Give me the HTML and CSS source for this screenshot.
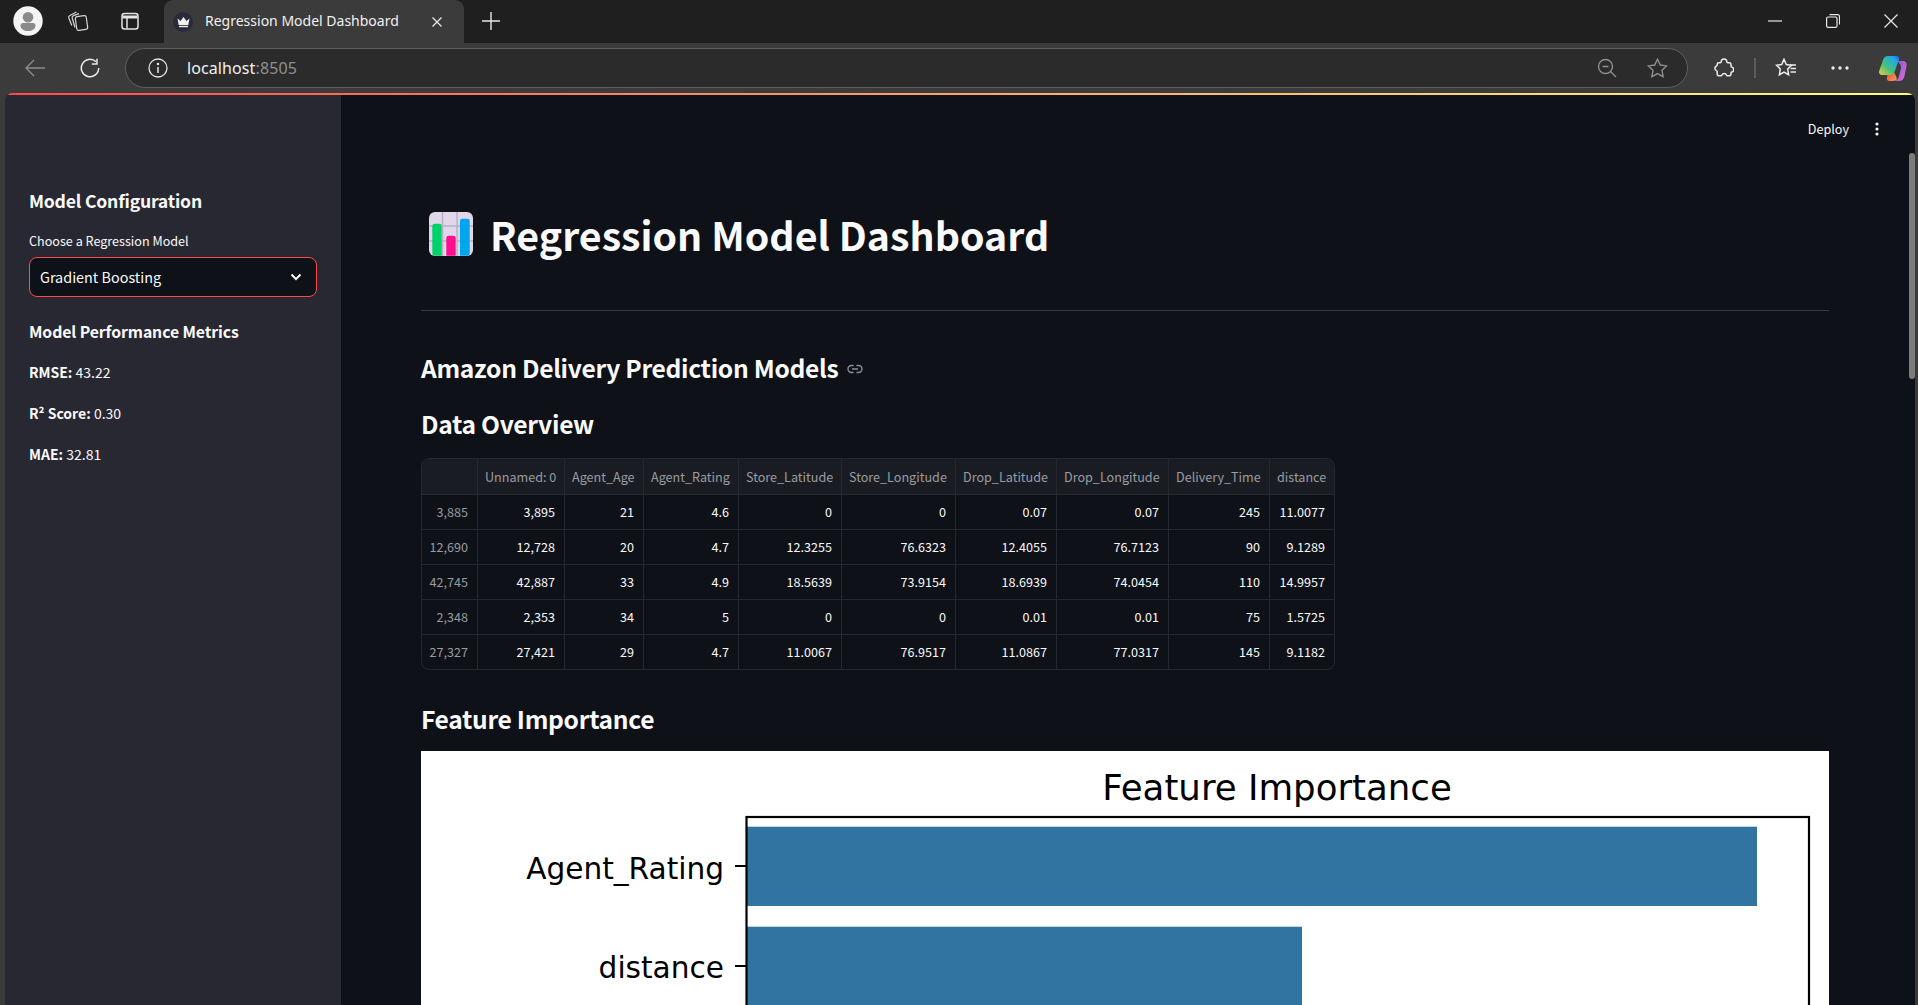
FILE: index.html
```html
<!DOCTYPE html>
<html lang="en">
<head>
<meta charset="utf-8">
<title>Regression Model Dashboard</title>
<link rel="stylesheet" href="styles.css">
</head>
<body>
<div class="browser">
  <header class="tabstrip">
    <div class="avatar">
      <svg width="30" height="30" viewBox="0 0 30 30"><circle cx="15" cy="15" r="14.700" fill="#f4f4f4"/><circle cx="15" cy="11.300" r="5.300" fill="#8a8a8a"/><path d="M7.500 19.500a2.500 2.500 0 0 1 2.500-2.500h10a2.500 2.500 0 0 1 2.500 2.500c0 3.500-3.300 5.500-7.500 5.500s-7.500-2-7.500-5.500z" fill="#8a8a8a"/></svg>
    </div>
    <button class="strip-btn workspaces">
      <svg width="22" height="22" viewBox="0 0 22 22" fill="none" stroke="#d6d6d6" stroke-width="1.200"><rect x="9" y="6" width="11" height="14" rx="2" transform="rotate(-8 14.500 13)"/><path d="M8 17.500 5.200 8a2 2 0 0 1 1.300-2.400L12 3.600"/><path d="M4.800 15.500 1.800 8a2 2 0 0 1 1.100-2.500L9.500 2"/></svg>
    </button>
    <button class="strip-btn verticaltabs">
      <svg width="20" height="20" viewBox="0 0 20 20" fill="none" stroke="#e4e4e4" stroke-width="1.500"><rect x="2" y="2.500" width="16" height="15.500" rx="2.500"/><path d="M2.500 6h15" stroke-width="3"/><path d="M7 7v10.500"/></svg>
    </button>
    <div class="tab">
      <span class="favicon">
        <svg width="15" height="12" viewBox="0 0 14 12"><path d="M1 2.500 4 5l3-4 3 4 3-2.500-1.200 6.500H2.200z" fill="#f0f0f0"/><rect x="2.500" y="9.800" width="9" height="1.400" fill="#f0f0f0"/></svg>
      </span>
      <span class="tab-title">Regression Model Dashboard</span>
      <svg class="tab-close" width="12" height="12" viewBox="0 0 12 12" stroke="#e8e8e8" stroke-width="1.300"><path d="M1.500 1.500l9 9M10.500 1.500l-9 9"/></svg>
    </div>
    <svg class="new-tab" width="18" height="18" viewBox="0 0 18 18" stroke="#e8e8e8" stroke-width="1.400"><path d="M9 0v18M0 9h18"/></svg>
    <div class="window-controls">
      <svg width="14" height="14" viewBox="0 0 14 14" stroke="#e8e8e8" stroke-width="1.200"><path d="M0 7h14"/></svg>
      <svg width="14" height="14" viewBox="0 0 14 14" fill="none" stroke="#e8e8e8" stroke-width="1.200"><rect x=".6" y="3" width="10.400" height="10.400" rx="1.500"/><path d="M3.500.6h8a2 2 0 0 1 2 2v8"/></svg>
      <svg width="14" height="14" viewBox="0 0 14 14" stroke="#e8e8e8" stroke-width="1.200"><path d="M.5.500l13 13M13.500.500l-13 13"/></svg>
    </div>
  </header>

  <nav class="toolbar">
    <svg class="tool-back" width="20" height="18" viewBox="0 0 20 18" fill="none" stroke="#8b8b8b" stroke-width="1.400"><path d="M20 9H1M9 1 1 9l8 8"/></svg>
    <svg class="tool-reload" width="20" height="20" viewBox="0 0 20 20" fill="none" stroke="#ececec" stroke-width="1.500"><path d="M18.700 10A8.700 8.700 0 1 1 16 3.700"/><path d="M17 .8v5.200h-5.200"/></svg>
    <div class="omnibox">
      <svg class="info" width="20" height="20" viewBox="0 0 20 20" fill="none" stroke="#e6e6e6" stroke-width="1.300"><circle cx="10" cy="10" r="9"/><path d="M10 9v6" stroke-width="1.500"/><circle cx="10" cy="6" r=".6" fill="#e6e6e6"/></svg>
      <span class="url">localhost<span class="port">:8505</span></span>
      <svg class="zoom-out" width="20" height="20" viewBox="0 0 20 20" fill="none" stroke="#8f8f8f" stroke-width="1.400"><circle cx="8.500" cy="8.500" r="7"/><path d="M13.500 13.500 19 19M5.500 8.500h6"/></svg>
      <svg class="star" width="21" height="20" viewBox="0 0 21 20" fill="none" stroke="#8f8f8f" stroke-width="1.400"><path d="m10.500 1.200 2.800 5.800 6.300.9-4.600 4.400 1.100 6.300-5.600-3-5.600 3 1.100-6.300L1.400 7.900l6.300-.9z"/></svg>
    </div>
    <svg class="tool-puzzle" width="20" height="20" viewBox="0 0 20 20" fill="none" stroke="#ececec" stroke-width="1.500"><path d="M7.200 3.800a2.800 2.800 0 0 1 5.600 0c0 .6.400 1 1 1h1.700a1.500 1.500 0 0 1 1.500 1.500v1.900c0 .5.300.8.800.9a2.600 2.600 0 0 1 0 5c-.5.100-.8.400-.8.900v1.300a1.500 1.500 0 0 1-1.500 1.500h-2.100c-.5 0-.8-.3-1-.8a2.400 2.400 0 0 0-4.400 0c-.2.500-.5.800-1 .8H4.700a1.500 1.500 0 0 1-1.500-1.500v-2.700c0-.5-.3-.8-.8-1a2.500 2.500 0 0 1 0-4.600c.5-.2.800-.5.800-1V6.300a1.500 1.500 0 0 1 1.500-1.500h1.500c.6 0 1-.4 1-1z"/></svg>
    <span class="tool-divider"></span>
    <svg class="tool-favs" width="22" height="20" viewBox="0 0 22 20" fill="none" stroke="#ececec" stroke-width="1.500"><path d="M9 1.200 11.300 6.500l5.200.7-3.800 3.700.9 5.800L9 14l-4.600 2.700.9-5.800L1.500 7.200l5.200-.7z"/><path d="M15 7h6M15.500 10.500H21M15.500 14H21"/></svg>
    <svg class="tool-more" width="18" height="4" viewBox="0 0 18 4" fill="#ececec"><circle cx="2" cy="2" r="1.700"/><circle cx="9" cy="2" r="1.700"/><circle cx="16" cy="2" r="1.700"/></svg>
    <svg class="tool-copilot" width="28" height="26" viewBox="0 0 28 26">
      <defs>
        <linearGradient id="cpa" x1="0" y1="1" x2="1" y2="0"><stop offset="0" stop-color="#f6c83c"/><stop offset=".4" stop-color="#46c27a"/><stop offset=".8" stop-color="#22a6e8"/><stop offset="1" stop-color="#1a5fd8"/></linearGradient>
        <linearGradient id="cpb" x1="0" y1="0" x2="1" y2="1"><stop offset="0" stop-color="#7a5ae8"/><stop offset="1" stop-color="#e86ac8"/></linearGradient>
        <linearGradient id="cpc" x1="0" y1="0" x2="1" y2="1"><stop offset="0" stop-color="#e8402c"/><stop offset="1" stop-color="#f6a05a"/></linearGradient>
      </defs>
      <path d="M14 15 17 21c.8 2 2 5-3 5H11c-3 0-3.500-2-3-4l2-7z" fill="url(#cpc)"/>
      <path d="M18 6h6c3 0 4 2.500 3.500 5l-2 10c-.6 3-2.500 5-5.500 5h-4c2.500-1 3.500-3 4-5l2-8c.3-2-.5-4-4-7z" fill="url(#cpb)"/>
      <path d="M9 1h9c2 0 2.500 2 1.800 4l-4.300 12c-.8 2-2 3-4 3H3C.5 20-.5 18 .3 15.500L4 5c.8-2.500 2.500-4 5-4z" fill="url(#cpa)"/>
    </svg>
  </nav>

  <div class="viewport">
    <div class="decoration"></div>
    <div class="app">
      <aside class="sidebar">
        <h3 class="side-title">Model Configuration</h3>
        <label class="side-label">Choose a Regression Model</label>
        <div class="select">
          <span>Gradient Boosting</span>
          <svg width="12" height="8" viewBox="0 0 12 8" fill="none" stroke="#fafafa" stroke-width="2"><path d="m1.500 1.500 4.500 4.500 4.500-4.500"/></svg>
        </div>
        <h4 class="side-sub">Model Performance Metrics</h4>
        <p class="metric"><strong>RMSE:</strong> 43.22</p>
        <p class="metric"><strong>R² Score:</strong> 0.30</p>
        <p class="metric"><strong>MAE:</strong> 32.81</p>
      </aside>

      <main class="main">
        <div class="topbar">
          <span class="deploy">Deploy</span>
          <svg class="kebab" width="4" height="14" viewBox="0 0 4 14" fill="#fafafa"><circle cx="2" cy="2" r="1.600"/><circle cx="2" cy="7" r="1.600"/><circle cx="2" cy="12" r="1.600"/></svg>
        </div>
        <div class="content">
          <h1 class="title">
            <svg class="emoji" width="44" height="44" viewBox="0 0 44 44">
              <rect width="44" height="44" rx="6" fill="#e0d8ea"/>
              <path d="M0 14h44M0 29h44M13.500 0v44M28 0v44" stroke="#b9b0c4" stroke-width="1.500"/>
              <path d="M3.300 14a2.300 2.300 0 0 1 2.300-2.300h4.800a2.300 2.300 0 0 1 2.300 2.300v29.700H5.600a2.300 2.300 0 0 1-2.300-2.300z" fill="#00d26a"/>
              <path d="M17.300 26a2.300 2.300 0 0 1 2.300-2.300h4.800a2.300 2.300 0 0 1 2.300 2.300v17.700h-9.400z" fill="#ff0e8e"/>
              <path d="M31 9a2.300 2.300 0 0 1 2.300-2.300h5.100a2.300 2.300 0 0 1 2.300 2.300v32.400a2.300 2.300 0 0 1-2.300 2.300H31z" fill="#00a6ed"/>
            </svg>
            Regression Model Dashboard
          </h1>
          <hr class="rule">
          <h2 class="heading amazon">Amazon Delivery Prediction Models
            <svg class="link" width="16" height="10" viewBox="0 0 16 10" fill="none" stroke="#8d8f94" stroke-width="1.400"><path d="M6.500 1.500H4.500a3.500 3.500 0 0 0 0 7h2M9.500 1.500h2a3.500 3.500 0 0 1 0 7h-2M5 5h6"/></svg>
          </h2>
          <h3 class="heading overview">Data Overview</h3>
          <div class="frame">
            <table class="data">
              <colgroup>
                <col class="c0"><col class="c1"><col class="c2"><col class="c3"><col class="c4"><col class="c5"><col class="c6"><col class="c7"><col class="c8"><col class="c9">
              </colgroup>
              <thead>
                <tr><th></th><th>Unnamed: 0</th><th>Agent_Age</th><th>Agent_Rating</th><th>Store_Latitude</th><th>Store_Longitude</th><th>Drop_Latitude</th><th>Drop_Longitude</th><th>Delivery_Time</th><th>distance</th></tr>
              </thead>
              <tbody>
                <tr><th>3,885</th><td>3,895</td><td>21</td><td>4.6</td><td>0</td><td>0</td><td>0.07</td><td>0.07</td><td>245</td><td>11.0077</td></tr>
                <tr><th>12,690</th><td>12,728</td><td>20</td><td>4.7</td><td>12.3255</td><td>76.6323</td><td>12.4055</td><td>76.7123</td><td>90</td><td>9.1289</td></tr>
                <tr><th>42,745</th><td>42,887</td><td>33</td><td>4.9</td><td>18.5639</td><td>73.9154</td><td>18.6939</td><td>74.0454</td><td>110</td><td>14.9957</td></tr>
                <tr><th>2,348</th><td>2,353</td><td>34</td><td>5</td><td>0</td><td>0</td><td>0.01</td><td>0.01</td><td>75</td><td>1.5725</td></tr>
                <tr><th>27,327</th><td>27,421</td><td>29</td><td>4.7</td><td>11.0067</td><td>76.9517</td><td>11.0867</td><td>77.0317</td><td>145</td><td>9.1182</td></tr>
              </tbody>
            </table>
          </div>
          <h3 class="heading feature">Feature Importance</h3>
          <svg class="chart" width="1408" height="254" viewBox="0 0 1408 254">
            <rect width="1408" height="254" fill="#fff"/>
            <text class="chart-title" x="856" y="49" text-anchor="middle">Feature Importance</text>
            <rect x="326" y="75.700" width="1010" height="79.300" fill="#3274a1"/>
            <rect x="326" y="175.700" width="555" height="79.300" fill="#3274a1"/>
            <rect x="325.500" y="66" width="1062.500" height="200" fill="none" stroke="#000" stroke-width="2.200"/>
            <path d="M314 115h11M314 215h11" stroke="#000" stroke-width="2"/>
            <text class="chart-label" x="303" y="127.500" text-anchor="end">Agent_Rating</text>
            <text class="chart-label" x="303" y="227" text-anchor="end">distance</text>
          </svg>
        </div>
        <div class="scrollthumb"></div>
      </main>
    </div>
  </div>
</div>
</body>
</html>
```
FILE: styles.css
```css
* { box-sizing: border-box; }
html, body { margin: 0; height: 100%; overflow: hidden; background: #3b3b3b; }
body { font-family: "Noto Sans CJK SC", "Noto Sans", sans-serif; color: #fafafa; }
h1, h2, h3, h4, p { margin: 0; }
button { background: none; border: 0; padding: 0; }
svg { display: block; flex: none; }

.browser { display: flex; flex-direction: column; height: 1005px; }

.tabstrip { display: flex; align-items: center; height: 43px; padding-bottom: 2px; background: #1f1f1f; flex: none; }
.avatar { margin-left: 13px; width: 30px; }
.strip-btn { display: flex; }
.workspaces { margin-left: 24px; }
.verticaltabs { margin-left: 31px; }
.tab { display: flex; align-items: center; align-self: flex-end; width: 300px; height: 43px; margin: 0 0 -2px 24px; background: #3b3b3b; border-radius: 9px 9px 0 0; }
.favicon { display: flex; align-items: center; justify-content: center; width: 20px; height: 20px; margin-left: 9px; border-radius: 50%; background: #2a2a3a; }
.tab-title { margin-left: 12px; padding-bottom: 2px; font: 14px/20px "Noto Sans", sans-serif; color: #f0f0f0; width: 226px; white-space: nowrap; }
.new-tab { margin-left: 18px; }
.window-controls { display: flex; align-items: center; gap: 44px; margin-left: auto; margin-right: 20px; }

.toolbar { display: flex; align-items: center; height: 50px; background: #3b3b3b; flex: none; }
.tool-back { margin-left: 25px; }
.tool-reload { margin-left: 35px; }
.omnibox { display: flex; align-items: center; width: 1563px; height: 40px; margin-left: 25px; background: #2b2b2b; border: 1.500px solid #5f5f5f; border-radius: 20px; }
.info { margin-left: 22px; }
.url { margin-left: 19px; font: 16px/20px "Noto Sans", sans-serif; color: #f2f2f2; letter-spacing: .1px; }
.port { color: #8f8f8f; }
.zoom-out { margin-left: auto; }
.star { margin-left: 30px; margin-right: 19px; }
.tool-puzzle { margin-left: 26px; }
.tool-divider { width: 2px; height: 20px; background: #5c5c5c; margin-left: 20px; }
.tool-favs { margin-left: 19px; }
.tool-more { margin-left: 34px; }
.tool-copilot { margin-left: 30px; }

.viewport { position: relative; flex: 1; min-height: 0; margin: 0 3px 0 5px; border-radius: 8px 8px 0 0; overflow: hidden; }
.decoration { height: 2px; background: linear-gradient(90deg, #ff4b4b, #fffd80); }
.app { display: flex; height: calc(100% - 2px); }

.sidebar { width: 336px; flex: none; padding: 93px 24px 0; background: #282832; }
.side-title { font-size: 17.600px; line-height: 26px; font-weight: 700; letter-spacing: -.2px; }
.side-label { display: block; margin-top: 17px; font-size: 12.600px; line-height: 20px; }
.select { display: flex; align-items: center; justify-content: space-between; height: 40px; margin-top: 6px; padding: 0 14px 0 10px; background: #0e1117; border: 1px solid #ff4b4b; border-radius: 8px; font-size: 14.400px; line-height: 24px; }
.side-sub { margin-top: 23px; font-size: 15.800px; line-height: 24px; font-weight: 700; letter-spacing: -.1px; }
.metric { margin-top: 21px; font-size: 14px; line-height: 20px; }
.side-sub + .metric { margin-top: 17.500px; }

.main { position: relative; flex: 1; min-width: 0; background: #0e1117; overflow: hidden; }
.topbar { display: flex; align-items: center; justify-content: flex-end; height: 68px; padding-right: 36px; }
.deploy { font-size: 12.600px; line-height: 20px; }
.kebab { margin-left: 26px; }
.scrollthumb { position: absolute; top: 58px; right: 0; width: 6px; height: 226px; background: #7d7d7d; border-radius: 3px; }

.content { padding: 0 86px 0 80px; }
.title { display: flex; align-items: center; margin-top: 47px; padding-left: 8px; font-size: 39.300px; line-height: 48px; font-weight: 700; }
.emoji { margin-right: 17px; }
.rule { height: 1px; margin: 52px 0 0; border: 0; background: #3a3c41; }
.heading { font-weight: 700; font-size: 24.600px; line-height: 36px; letter-spacing: -.3px; }
.amazon { display: flex; align-items: center; gap: 9px; margin-top: 38px; }
.link { margin-top: 4px; }
.overview { margin-top: 20px; }
.frame { width: 914px; margin-top: 17px; border: 1px solid #26282e; border-radius: 8px; overflow: hidden; }
.data { width: 912px; table-layout: fixed; border-collapse: separate; border-spacing: 0; font-size: 12.600px; line-height: 20px; }
.c0 { width: 56px; } .c1 { width: 87px; } .c2 { width: 79px; } .c3 { width: 95px; } .c4 { width: 103px; }
.c5 { width: 114px; } .c6 { width: 101px; } .c7 { width: 112px; } .c8 { width: 101px; } .c9 { width: 64px; }
.data th, .data td { height: 35px; padding: 0 9px 0 7px; text-align: right; font-weight: 400; border-right: 1px solid #26282e; border-bottom: 1px solid #26282e; white-space: nowrap; overflow: hidden; }
.data th { color: #9a9ca1; }
.data thead th { background: #1a1c24; height: 36px; }
.data tr > :last-child { border-right: 0; }
.data tbody tr:last-child > * { border-bottom: 0; height: 34px; }
.feature { margin-top: 30px; }
.chart { margin-top: 15px; }
.chart-title { font-family: "DejaVu Sans", sans-serif; font-size: 35.600px; fill: #000; }
.chart-label { font-family: "DejaVu Sans", sans-serif; font-size: 29.600px; fill: #000; }
```
